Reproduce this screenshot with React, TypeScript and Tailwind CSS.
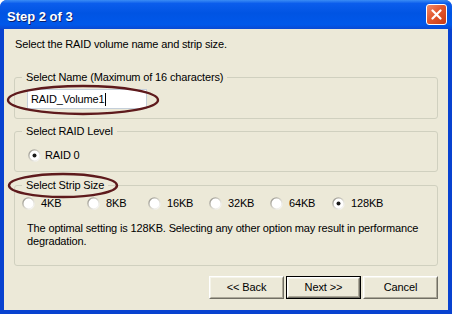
import React from 'react'

const FONT = { fontFamily: '"Liberation Sans", Arial, sans-serif' }

function Radio({ checked = false }: { checked?: boolean }) {
  return (
    <svg width="13" height="13" viewBox="0 0 13 13" className="shrink-0">
      <defs>
        <linearGradient id="rg" x1="0" y1="0" x2="1" y2="1">
          <stop offset="0" stopColor="#8f8d86" />
          <stop offset="0.5" stopColor="#d6d4ca" />
          <stop offset="1" stopColor="#ffffff" />
        </linearGradient>
      </defs>
      <circle cx="6.5" cy="6.5" r="5.6" fill="#fff" stroke="url(#rg)" strokeWidth="1.4" />
      {checked && <circle cx="6.5" cy="6.5" r="2" fill="#1a1a1a" />}
    </svg>
  )
}

function Group({ title, children, className = '' }: { title: string; children: React.ReactNode; className?: string }) {
  return (
    <div className={`mx-[10px] border border-[#D0D0BF] rounded-[3px] ${className}`}>
      <div className="-mt-[7px] ml-[7px] px-[4px] w-fit bg-[#ECE9D8] leading-[13px]">{title}</div>
      {children}
    </div>
  )
}

function Button({ label, isDefault = false }: { label: string; isDefault?: boolean }) {
  return (
    <button className={`w-[75px] h-[23px] p-0 bg-[#ECE9D8] ${isDefault ? 'border border-black' : ''}`}>
      <div className="h-full w-full border border-t-white border-l-white border-b-[#716F64] border-r-[#716F64]">
        <div className="h-full w-full border border-t-[#F5F4EA] border-l-[#F5F4EA] border-b-[#ACA899] border-r-[#ACA899] flex items-center justify-center text-[11px] text-black tracking-[-0.1px]">
          {label}
        </div>
      </div>
    </button>
  )
}

export default function App() {
  const sizes = [
    { label: '4KB', w: 'w-[65px]' },
    { label: '8KB', w: 'w-[61px]' },
    { label: '16KB', w: 'w-[61px]' },
    { label: '32KB', w: 'w-[61px]' },
    { label: '64KB', w: 'w-[62px]' },
    { label: '128KB', w: 'w-[70px]', checked: true },
  ]

  return (
    <div className="w-[452px] h-[314px] bg-white relative text-[11px] text-black" style={FONT}>
      <div className="h-full flex flex-col rounded-t-[7px] overflow-hidden bg-[#0842D0]">
        {/* title bar */}
        <div className="h-[29px] shrink-0 flex items-center justify-between pl-[7px] pr-[5px] bg-[linear-gradient(to_bottom,#3A8CF5_0%,#0B5DEC_12%,#0054E3_45%,#0058EA_85%,#0A49D2_100%)]">
          <span className="pt-[4px] text-white font-bold text-[13px] [text-shadow:1px_1px_0_#0A1E6E]">Step 2 of 3</span>
          <div className="w-[21px] h-[21px] rounded-[3px] border border-white bg-[linear-gradient(135deg,#F08B6A_0%,#E2582F_45%,#C83A12_100%)] flex items-center justify-center">
            <svg width="11" height="11" viewBox="0 0 11 11">
              <path d="M1.5 1.5 L9.5 9.5 M9.5 1.5 L1.5 9.5" stroke="#fff" strokeWidth="2.2" strokeLinecap="round" />
            </svg>
          </div>
        </div>

        {/* body */}
        <div className="flex-1 mx-[4px] mb-[4px] bg-[#ECE9D8] flex flex-col pt-[9px] tracking-[-0.15px]">
          <div className="pl-[11px] leading-[13px]">Select the RAID volume name and strip size.</div>

          <Group title="Select Name (Maximum of 16 characters)" className="mt-[26px] pb-[9px]">
            <div className="mt-[5px] ml-[12px] w-[120px] h-[20px] bg-white border border-[#C4CFDA] flex items-center pl-[3px]">
              <span>RAID_Volume1</span>
              <span className="w-px h-[13px] bg-black ml-[1px]" />
            </div>
          </Group>

          <Group title="Select RAID Level" className="mt-[12px] pb-[9px]">
            <div className="mt-[11px] ml-[13px] flex items-center gap-[4px] leading-[13px]">
              <Radio checked />
              <span>RAID 0</span>
            </div>
          </Group>

          <Group title="Select Strip Size" className="mt-[13px] pb-[17px]">
            <div className="mt-[5px] ml-[7px] flex items-center leading-[13px]">
              {sizes.map((s) => (
                <div key={s.label} className={`${s.w} flex items-center gap-[6px]`}>
                  <Radio checked={s.checked} />
                  <span>{s.label}</span>
                </div>
              ))}
            </div>
            <div className="mt-[12px] ml-[12px] mr-[4px] leading-[13px]">
              The optimal setting is 128KB. Selecting any other option may result in performance degradation.
            </div>
          </Group>

          <div className="mt-[10px] mr-[10px] flex justify-end gap-[2px]">
            <Button label="<< Back" />
            <Button label="Next >>" isDefault />
            <Button label="Cancel" />
          </div>
        </div>
      </div>

      {/* annotation ovals */}
      <svg className="absolute left-0 top-0 pointer-events-none" width="452" height="314">
        <ellipse cx="83" cy="100" rx="75" ry="14" fill="none" stroke="#5E1A1C" strokeWidth="2.4" />
        <ellipse cx="63" cy="185.5" rx="54" ry="11.5" fill="none" stroke="#5E1A1C" strokeWidth="2.4" />
      </svg>
    </div>
  )
}
